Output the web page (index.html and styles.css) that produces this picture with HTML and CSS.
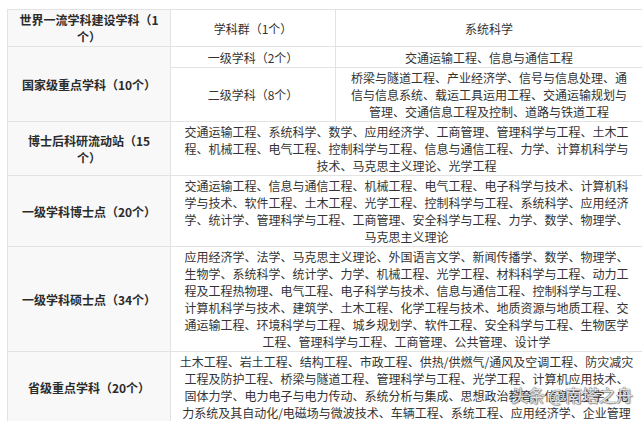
FILE: index.html
```html
<!DOCTYPE html>
<html lang="zh">
<head>
<meta charset="utf-8">
<link rel="stylesheet" href="styles.css">
</head>
<body>
<div class="wrap">
<table class="tbl">
  <colgroup>
    <col class="c1">
    <col class="c2">
    <col class="c3">
  </colgroup>
  <tr class="r-first">
    <td class="head">世界一流学科建设学科（1<br>个）</td>
    <td>学科群（1个）</td>
    <td>系统科学</td>
  </tr>
  <tr class="r-one">
    <td class="head" rowspan="2">国家级重点学科（10个）</td>
    <td>一级学科（2个）</td>
    <td>交通运输工程、信息与通信工程</td>
  </tr>
  <tr>
    <td>二级学科（8个）</td>
    <td>桥梁与隧道工程、产业经济学、信号与信息处理、通<br>信与信息系统、载运工具运用工程、交通运输规划与<br>管理、交通信息工程及控制、道路与铁道工程</td>
  </tr>
  <tr>
    <td class="head">博士后科研流动站（15<br>个）</td>
    <td colspan="2">交通运输工程、系统科学、数学、应用经济学、工商管理、管理科学与工程、土木工<br>程、机械工程、电气工程、控制科学与工程、信息与通信工程、力学、计算机科学与<br>技术、马克思主义理论、光学工程</td>
  </tr>
  <tr>
    <td class="head">一级学科博士点（20个）</td>
    <td colspan="2">交通运输工程、信息与通信工程、机械工程、电气工程、电子科学与技术、计算机科<br>学与技术、软件工程、土木工程、光学工程、控制科学与工程、系统科学、应用经济<br>学、统计学、管理科学与工程、工商管理、安全科学与工程、力学、数学、物理学、<br>马克思主义理论</td>
  </tr>
  <tr>
    <td class="head">一级学科硕士点（34个）</td>
    <td colspan="2">应用经济学、法学、马克思主义理论、外国语言文学、新闻传播学、数学、物理学、<br>生物学、系统科学、统计学、力学、机械工程、光学工程、材料科学与工程、动力工<br>程及工程热物理、电气工程、电子科学与技术、信息与通信工程、控制科学与工程、<br>计算机科学与技术、建筑学、土木工程、化学工程与技术、地质资源与地质工程、交<br>通运输工程、环境科学与工程、城乡规划学、软件工程、安全科学与工程、生物医学<br>工程、管理科学与工程、工商管理、公共管理、设计学</td>
  </tr>
  <tr>
    <td class="head">省级重点学科（20个）</td>
    <td colspan="2">土木工程、岩土工程、结构工程、市政工程、供热/供燃气/通风及空调工程、防灾减灾<br>工程及防护工程、桥梁与隧道工程、管理科学与工程、光学工程、计算机应用技术、<br>固体力学、电力电子与电力传动、系统分析与集成、思想政治教育、信息安全学、电<br>力系统及其自动化/电磁场与微波技术、车辆工程、系统工程、应用经济学、企业管理</td>
  </tr>
</table>
<div class="watermark">头条 @南塔之舟</div>
</div>
</body>
</html>
```

FILE: styles.css
```css
html, body {
  margin: 0;
  padding: 0;
  background: #ffffff;
  overflow: hidden;
}
body {
  font-family: "Noto Sans CJK SC", "Noto Sans", sans-serif;
  font-size: 12px;
  color: #333333;
}
.wrap {
  position: relative;
  padding: 9px 0 0 7px;
  width: 635px;
}
.tbl {
  border-collapse: collapse;
  table-layout: fixed;
  width: 635px;
}
.c1 { width: 163px; }
.c2 { width: 165px; }
.c3 { width: 307px; }
.tbl td {
  border: 1px solid #e3e3e3;
  padding: 1px 8px;
  line-height: 17px;
  text-align: center;
  vertical-align: middle;
  white-space: nowrap;
}
.tbl td.head {
  padding: 1px 10px;
  background: #f8f8f8;
  font-weight: bold;
  color: #2b2b2b;
}
.r-one td {
  padding-top: 2px;
  padding-bottom: 1px;
}
.watermark {
  position: absolute;
  left: 511px;
  top: 385px;
  font-size: 17px;
  line-height: 20px;
  color: rgba(255, 255, 255, 0.85);
  text-shadow: 0 0 1px #555, 0 0 1px #555, 1px 1px 1px rgba(0,0,0,0.35);
}
```
